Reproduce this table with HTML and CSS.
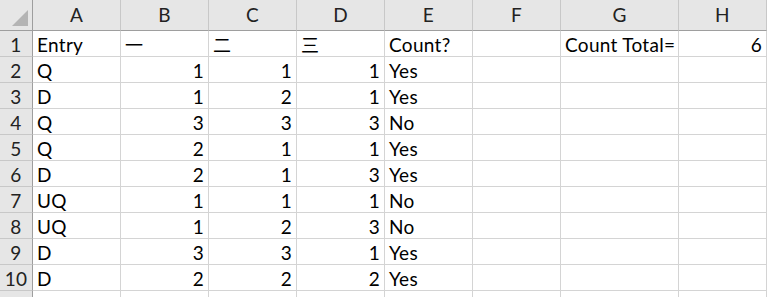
FILE: index.html
```html
<!DOCTYPE html>
<html>
  <head>
    <title>Count sheet</title>
    <link rel="stylesheet" href="styles.css">
  </head>
  <body>
    <div class="sheet">
      <!-- column headers -->
      <div class="cell corner"><span class="select-all"></span></div>
      <div class="cell col-head">A</div>
      <div class="cell col-head">B</div>
      <div class="cell col-head">C</div>
      <div class="cell col-head">D</div>
      <div class="cell col-head">E</div>
      <div class="cell col-head">F</div>
      <div class="cell col-head">G</div>
      <div class="cell col-head">H</div>

      <div class="cell row-head">1</div>
      <div class="cell">Entry</div>
      <div class="cell cjk">一</div>
      <div class="cell cjk">二</div>
      <div class="cell cjk">三</div>
      <div class="cell">Count?</div>
      <div class="cell"></div>
      <div class="cell">Count Total=</div>
      <div class="cell num">6</div>

      <div class="cell row-head">2</div>
      <div class="cell">Q</div>
      <div class="cell num">1</div>
      <div class="cell num">1</div>
      <div class="cell num">1</div>
      <div class="cell">Yes</div>
      <div class="cell"></div>
      <div class="cell"></div>
      <div class="cell"></div>

      <div class="cell row-head">3</div>
      <div class="cell">D</div>
      <div class="cell num">1</div>
      <div class="cell num">2</div>
      <div class="cell num">1</div>
      <div class="cell">Yes</div>
      <div class="cell"></div>
      <div class="cell"></div>
      <div class="cell"></div>

      <div class="cell row-head">4</div>
      <div class="cell">Q</div>
      <div class="cell num">3</div>
      <div class="cell num">3</div>
      <div class="cell num">3</div>
      <div class="cell">No</div>
      <div class="cell"></div>
      <div class="cell"></div>
      <div class="cell"></div>

      <div class="cell row-head">5</div>
      <div class="cell">Q</div>
      <div class="cell num">2</div>
      <div class="cell num">1</div>
      <div class="cell num">1</div>
      <div class="cell">Yes</div>
      <div class="cell"></div>
      <div class="cell"></div>
      <div class="cell"></div>

      <div class="cell row-head">6</div>
      <div class="cell">D</div>
      <div class="cell num">2</div>
      <div class="cell num">1</div>
      <div class="cell num">3</div>
      <div class="cell">Yes</div>
      <div class="cell"></div>
      <div class="cell"></div>
      <div class="cell"></div>

      <div class="cell row-head">7</div>
      <div class="cell">UQ</div>
      <div class="cell num">1</div>
      <div class="cell num">1</div>
      <div class="cell num">1</div>
      <div class="cell">No</div>
      <div class="cell"></div>
      <div class="cell"></div>
      <div class="cell"></div>

      <div class="cell row-head">8</div>
      <div class="cell">UQ</div>
      <div class="cell num">1</div>
      <div class="cell num">2</div>
      <div class="cell num">3</div>
      <div class="cell">No</div>
      <div class="cell"></div>
      <div class="cell"></div>
      <div class="cell"></div>

      <div class="cell row-head">9</div>
      <div class="cell">D</div>
      <div class="cell num">3</div>
      <div class="cell num">3</div>
      <div class="cell num">1</div>
      <div class="cell">Yes</div>
      <div class="cell"></div>
      <div class="cell"></div>
      <div class="cell"></div>

      <div class="cell row-head">10</div>
      <div class="cell">D</div>
      <div class="cell num">2</div>
      <div class="cell num">2</div>
      <div class="cell num">2</div>
      <div class="cell">Yes</div>
      <div class="cell"></div>
      <div class="cell"></div>
      <div class="cell"></div>

      <!-- top sliver of the next row -->
      <div class="cell row-head edge"></div>
      <div class="cell edge"></div>
      <div class="cell edge"></div>
      <div class="cell edge"></div>
      <div class="cell edge"></div>
      <div class="cell edge"></div>
      <div class="cell edge"></div>
      <div class="cell edge"></div>
      <div class="cell edge"></div>
    </div>
  </body>
</html>
```

FILE: styles.css
```css
body {
  background: #fff;
  color: #000;
  font-family: Lato, "Noto Sans CJK SC", sans-serif;
  font-size: 19px;
  letter-spacing: 0.3px;
  margin: 0;
  overflow: hidden;
}

.sheet {
  display: grid;
  grid-template-columns: 33px repeat(6, 88px) 118px 88px;
  grid-template-rows: 31px repeat(10, 26px) 6px;
}

.cell {
  border-bottom: 1px solid #d4d4d4;
  border-right: 1px solid #d4d4d4;
  box-sizing: border-box;
  line-height: 25px;
  overflow: hidden;
  padding: 1px 4px 0 4px;
  white-space: nowrap;
}

.cell.edge {
  border-bottom: none;
}

.num {
  text-align: right;
}

.cjk {
  font-family: "Noto Sans CJK SC", sans-serif;
  font-size: 18px;
}

.col-head,
.row-head,
.corner {
  background: #e6e6e6;
  color: #222;
  text-align: center;
}

.col-head {
  border-bottom-color: #9e9e9e;
  border-right-color: #c8c8c8;
  line-height: 30px;
  padding: 0;
}

.row-head {
  border-bottom-color: #c8c8c8;
  border-right-color: #9e9e9e;
  padding: 1px 0 0 0;
}

.corner {
  border-bottom-color: #9e9e9e;
  border-right-color: #9e9e9e;
  padding: 0;
  position: relative;
}

/* select-all triangle in the corner */
.select-all {
  background: #b4b4b4;
  bottom: 4px;
  clip-path: polygon(100% 0, 100% 100%, 0 100%);
  height: 16px;
  position: absolute;
  right: 4px;
  width: 16px;
}
```
